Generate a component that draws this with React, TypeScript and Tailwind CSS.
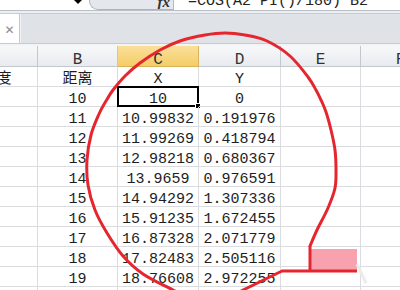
import React from 'react';

const mono = "font-['Liberation_Mono','Noto_Sans_CJK_SC',monospace]";
const cjk = "font-['Noto_Sans_CJK_SC',sans-serif]";

// column widths incl. right gridline (A starts off-screen)
const widths = ['w-[82px]', 'w-[80px]', 'w-[81px]', 'w-[82px]', 'w-[80px]', 'w-[80px]'];
const letters = ['', 'B', 'C', 'D', 'E', 'F'];

const data: [string, string, string][] = [
  ['10', '10', '0'],
  ['11', '10.99832', '0.191976'],
  ['12', '11.99269', '0.418794'],
  ['13', '12.98218', '0.680367'],
  ['14', '13.9659', '0.976591'],
  ['15', '14.94292', '1.307336'],
  ['16', '15.91235', '1.672455'],
  ['17', '16.87328', '2.071779'],
  ['18', '17.82483', '2.505116'],
  ['19', '18.76608', '2.972255'],
  ['', '', ''],
];

// red hand-drawn circle, traced from the screenshot
const circle: [number, number][] = [
  [192, 300], [173, 290], [143, 274], [123, 256], [107, 233], [95, 210], [88, 185], [87, 160],
  [91, 135], [99, 114], [106, 101], [113, 90], [125, 76], [140, 63], [160, 50], [180, 41],
  [205, 35], [225, 33], [245, 35], [267, 41], [290, 56], [308, 77], [316, 90], [321, 100],
  [326, 112], [331, 130], [335, 150], [336, 170], [335, 188], [328, 208], [317, 230], [310, 246],
];

function smoothPath(pts: [number, number][]) {
  let d = `M${pts[0][0]},${pts[0][1]}`;
  for (let i = 0; i < pts.length - 1; i++) {
    const p0 = pts[i - 1] || pts[i];
    const p1 = pts[i];
    const p2 = pts[i + 1];
    const p3 = pts[i + 2] || p2;
    const c1x = p1[0] + (p2[0] - p0[0]) / 6;
    const c1y = p1[1] + (p2[1] - p0[1]) / 6;
    const c2x = p2[0] - (p3[0] - p1[0]) / 6;
    const c2y = p2[1] - (p3[1] - p1[1]) / 6;
    d += ` C${c1x.toFixed(1)},${c1y.toFixed(1)} ${c2x.toFixed(1)},${c2y.toFixed(1)} ${p2[0]},${p2[1]}`;
  }
  return d;
}

function Cell({ w, children, selected, cn }: { w: string; children?: React.ReactNode; selected?: boolean; cn?: string }) {
  return (
    <div className={`${w} shrink-0 h-full relative flex justify-center border-r border-b border-[#dadcdf] text-[15px] text-[#1e1e1e] ${cn ?? `${mono} pt-[7px] leading-[12px]`}`}>
      {children}
      {selected && (
        <div className="absolute -left-px -top-px -right-px -bottom-px border-2 border-black">
          <div className="absolute -right-[4px] -bottom-[4px] w-[6px] h-[6px] bg-black border border-white" />
        </div>
      )}
    </div>
  );
}

export default function App() {
  return (
    <div className="w-[400px] h-[290px] overflow-hidden relative bg-white">
      {/* Formula bar (cut at the top) */}
      <div className="h-[11px] flex border-b border-[#b9bfc7] bg-white">
        <div className="w-[89px] shrink-0 flex justify-end pr-[7px]">
          <div className="w-0 h-0 border-l-[4px] border-r-[4px] border-t-[4px] border-l-transparent border-r-transparent border-t-black" />
        </div>
        <div className="w-[84px] shrink-0 bg-[#e4e7eb] border-l border-b border-[#aeb4bc] rounded-bl-[9px] flex justify-end pr-[3px] overflow-hidden">
          <span className="font-['Liberation_Serif',serif] italic font-bold text-[15px] leading-[12px] -mt-[4px] text-[#333]">fx</span>
        </div>
        <div className={`flex-1 border-l border-[#b4bac2] pl-[14px] overflow-hidden ${mono} text-[15px] leading-[12px] text-[#222]`}>
          <div className="-mt-[4px] whitespace-nowrap">=COS(A2*PI()/180)*B2</div>
        </div>
      </div>
      <div className="h-[3px] bg-[#eceef1] border-b border-[#c9cdd3]" />

      {/* Document tab strip */}
      <div className="h-[30px] flex bg-[#dfe2e6] border-b border-[#c7ccd2]">
        <div className="w-[20px] bg-white border-r border-[#c5c9cf] flex items-center justify-center pt-[3px]">
          <span className="text-[#8a8d92] text-[12px] leading-none font-['DejaVu_Sans',sans-serif]">✕</span>
        </div>
        <div className="flex-1 border-l border-[#f1f2f4]" />
      </div>
      <div className="h-[2px] bg-[#f3f4f6]" />

      {/* Sheet */}
      <div className="-ml-[44px] flex flex-col">
        {/* Column headers */}
        <div className="flex h-[21px]">
          {letters.map((l, i) => (
            <div
              key={i}
              className={`${widths[i]} shrink-0 flex justify-center border-r border-b pt-[8px] leading-[12px] text-[16px] ${mono} ${
                l === 'C'
                  ? 'bg-gradient-to-b from-[#fae09a] to-[#f5cd66] border-[#d9b35a] text-[#333]'
                  : 'bg-gradient-to-b from-[#f7f8fa] to-[#e8ebef] border-[#c3c8cf] text-[#333]'
              }`}
            >
              {l}
            </div>
          ))}
        </div>

        {/* Row 2: labels */}
        <div className="flex h-[20px]">
          <Cell w={widths[0]} cn={`${cjk} leading-[19px]`}>角度</Cell>
          <Cell w={widths[1]} cn={`${cjk} leading-[19px]`}>距离</Cell>
          <Cell w={widths[2]}>X</Cell>
          <Cell w={widths[3]}>Y</Cell>
          <Cell w={widths[4]} />
          <Cell w={widths[5]} />
        </div>

        {data.map((r, i) => (
          <div key={i} className="flex h-[20px]">
            <Cell w={widths[0]} />
            <Cell w={widths[1]}>{r[0]}</Cell>
            <Cell w={widths[2]} selected={i === 0}>{r[1]}</Cell>
            <Cell w={widths[3]}>{r[2]}</Cell>
            <Cell w={widths[4]} />
            <Cell w={widths[5]} />
          </div>
        ))}
      </div>

      {/* Red annotation drawn over the sheet */}
      <svg className="absolute left-0 top-0 pointer-events-none" width="400" height="290" viewBox="0 0 400 290">
        <rect x="311" y="249" width="46" height="21" fill="#f8a2b0" />
        <line x1="357" y1="264" x2="366" y2="283" stroke="#ececec" strokeWidth="3" />
        <path d={smoothPath(circle)} fill="none" stroke="#e6262f" strokeWidth="3" strokeLinecap="round" strokeLinejoin="round" />
        <path d="M310,246 L310,271" fill="none" stroke="#e6262f" strokeWidth="3" />
        <path d="M222,302 L243,290 L282,271 L357,271" fill="none" stroke="#e6262f" strokeWidth="3" strokeLinejoin="round" />
      </svg>
    </div>
  );
}
